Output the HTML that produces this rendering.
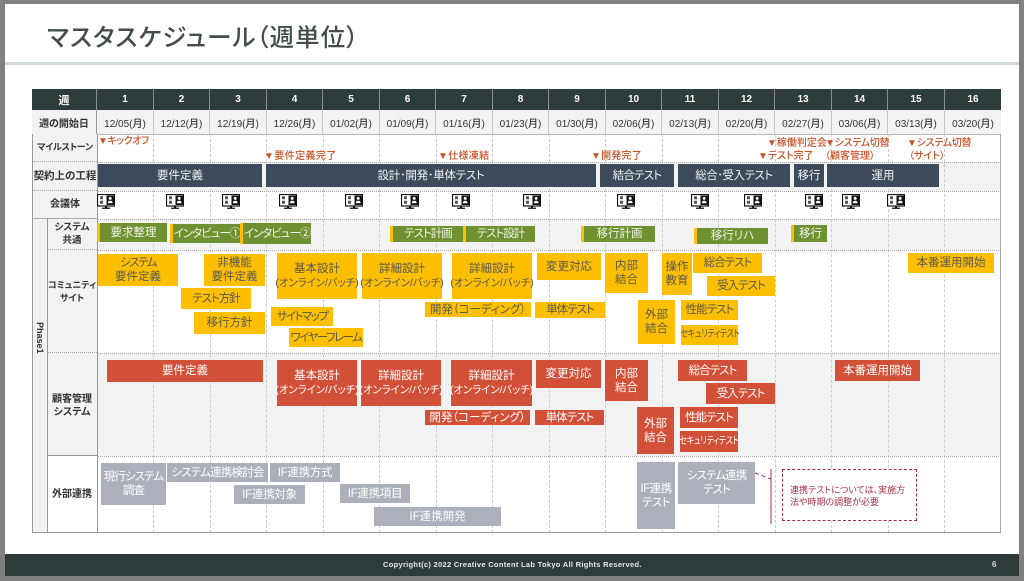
<!DOCTYPE html>
<html lang="ja"><head><meta charset="utf-8"><title>マスタスケジュール</title>
<style>
html,body{margin:0;padding:0}
body{width:1024px;height:581px;background:#fff;overflow:hidden;position:relative;font-family:"Liberation Sans","Noto Sans CJK JP",sans-serif;color:#404a4a;filter:blur(.3px)}
div{position:absolute;box-sizing:border-box}
.b{display:flex;align-items:center;justify-content:center;text-align:center;font-size:11.5px;line-height:14px;white-space:nowrap;font-feature-settings:"palt"}
.y{background:#fdbf00;color:#5a5a50}
.r{background:#d24f38;color:#fff}
.g{background:#6f9132;color:#f2f2e6;border-left:3px solid #fdbf00}
.n{background:#3c4a5c;color:#f2f2f2}
.c{background:#abb0bb;color:#fff}
.k{letter-spacing:-1px}
.k2{letter-spacing:-1.5px}
.o{font-size:10.5px;letter-spacing:-.1px}
.sc{display:inline-block;font-size:10px;letter-spacing:-.4px;transform:scaleX(.8);white-space:nowrap}
.h{background:#2f3c3c;color:#fff;font-weight:700;font-size:10px;top:89px;height:21px;display:flex;align-items:center;justify-content:center;border-right:1px solid #89908f}
.d{background:#f2f2f2;color:#333;font-size:10px;font-weight:500;top:110px;height:24px;display:flex;align-items:center;justify-content:center;border-right:1px solid #c8c8c8;white-space:nowrap;font-feature-settings:"palt"}
.l{left:47px;width:50px;display:flex;align-items:center;justify-content:center;text-align:center;font-size:9.5px;line-height:13px;font-weight:700;color:#333;background:#f2f2f2;border-bottom:1px dotted #aaa;white-space:nowrap;font-feature-settings:"palt"}
.m{color:#c8532b;font-size:10px;line-height:12px;font-weight:500;white-space:nowrap;font-feature-settings:"palt"}
.v{top:134px;height:399px;width:0;border-left:1px dashed #cccccc}
.t{left:97px;width:904px;height:0;border-top:1px dotted #a8a8a8}
svg.i{position:absolute;width:18px;height:16px;top:194px}
</style></head><body>
<div style="left:0;top:0;width:1024px;height:581px;border-style:solid;border-color:#808080;border-width:4px 5px 5px 5px"></div>
<div style="left:47px;top:23px;font-size:24.5px;line-height:32px;font-weight:500;color:#434c4c;white-space:nowrap;font-feature-settings:'palt';letter-spacing:1px">マスタスケジュール（週単位）</div>
<div style="left:5px;top:62px;width:1014px;height:3px;background:#cfd9d7"></div>

<!-- bands -->
<div style="left:97px;top:162px;width:904px;height:29px;background:#f2f2f2"></div>
<div style="left:97px;top:219px;width:904px;height:31px;background:#f2f2f2"></div>
<div style="left:97px;top:353px;width:904px;height:103px;background:#f2f2f2"></div>

<!-- header -->
<div class="h" style="left:32px;width:65px;font-size:11px">週</div>
<div class="h" style="left:97px;width:57px">1</div><div class="h" style="left:154px;width:56px">2</div><div class="h" style="left:210px;width:57px">3</div><div class="h" style="left:267px;width:56px">4</div><div class="h" style="left:323px;width:57px">5</div><div class="h" style="left:380px;width:56px">6</div><div class="h" style="left:436px;width:57px">7</div><div class="h" style="left:493px;width:56px">8</div><div class="h" style="left:549px;width:57px">9</div><div class="h" style="left:606px;width:56px">10</div><div class="h" style="left:662px;width:57px">11</div><div class="h" style="left:719px;width:56px">12</div><div class="h" style="left:775px;width:57px">13</div><div class="h" style="left:832px;width:56px">14</div><div class="h" style="left:888px;width:57px">15</div><div class="h" style="left:945px;width:56px;border-right:0">16</div>
<div class="d" style="left:32px;width:65px;font-weight:700;border-right:1px solid #999">週の開始日</div>
<div class="d" style="left:97px;width:57px">12/05(月)</div><div class="d" style="left:154px;width:56px">12/12(月)</div><div class="d" style="left:210px;width:57px">12/19(月)</div><div class="d" style="left:267px;width:56px">12/26(月)</div><div class="d" style="left:323px;width:57px">01/02(月)</div><div class="d" style="left:380px;width:56px">01/09(月)</div><div class="d" style="left:436px;width:57px">01/16(月)</div><div class="d" style="left:493px;width:56px">01/23(月)</div><div class="d" style="left:549px;width:57px">01/30(月)</div><div class="d" style="left:606px;width:56px">02/06(月)</div><div class="d" style="left:662px;width:57px">02/13(月)</div><div class="d" style="left:719px;width:56px">02/20(月)</div><div class="d" style="left:775px;width:57px">02/27(月)</div><div class="d" style="left:832px;width:56px">03/06(月)</div><div class="d" style="left:888px;width:57px">03/13(月)</div><div class="d" style="left:945px;width:56px;border-right:0">03/20(月)</div>
<div style="left:32px;top:134px;width:969px;height:1px;background:#b5b5b5"></div>

<!-- left column -->
<div style="left:32px;top:134px;width:15px;height:399px;background:#f2f2f2;border-left:1px solid #999"></div>
<div class="l" style="left:33px;width:64px;top:134px;height:28px;font-size:9px;letter-spacing:-.3px">マイルストーン</div>
<div class="l" style="left:33px;width:64px;top:162px;height:29px;font-size:10.5px">契約上の工程</div>
<div class="l" style="left:33px;width:64px;top:191px;height:28px;font-size:10px;border-bottom:1px solid #aaa">会議体</div>
<div class="l" style="top:219px;height:31px">システム<br>共通</div>
<div class="l" style="top:250px;height:103px;padding-bottom:18px;font-size:9px">コミュニティ<br>サイト</div>
<div class="l" style="top:353px;height:103px;padding-top:4px;font-size:10px;border-bottom:1px solid #999">顧客管理<br>システム</div>
<div class="l" style="top:456px;height:77px;background:#fff;border:0;font-size:10px">外部連携</div>
<div style="left:47px;top:219px;width:1px;height:314px;background:#999"></div>
<div style="left:97px;top:134px;width:1px;height:399px;background:#999"></div>
<div style="left:33px;top:322px;width:13px;height:40px;writing-mode:vertical-rl;font-size:9px;line-height:13px;font-weight:700;color:#333">Phase1</div>

<!-- grid lines -->
<div class="v" style="left:153px"></div><div class="v" style="left:210px"></div><div class="v" style="left:266px"></div><div class="v" style="left:323px"></div><div class="v" style="left:379px"></div><div class="v" style="left:436px"></div><div class="v" style="left:492px"></div><div class="v" style="left:549px"></div><div class="v" style="left:605px"></div><div class="v" style="left:662px"></div><div class="v" style="left:718px"></div><div class="v" style="left:775px"></div><div class="v" style="left:831px"></div><div class="v" style="left:888px"></div><div class="v" style="left:944px"></div>
<div class="t" style="top:162px"></div><div class="t" style="top:191px"></div><div class="t" style="top:219px"></div><div class="t" style="top:250px"></div><div class="t" style="top:353px"></div><div class="t" style="top:456px"></div>
<div style="left:1000px;top:134px;width:1px;height:399px;background:#a8a8a8"></div>
<div style="left:32px;top:532px;width:969px;height:1px;background:#999"></div>

<!-- milestones -->
<div class="m" style="left:98px;top:136px;letter-spacing:-.5px">▼キックオフ</div>
<div class="m" style="left:264px;top:151px;letter-spacing:.4px">▼要件定義完了</div>
<div class="m" style="left:438px;top:151px;letter-spacing:.3px">▼仕様凍結</div>
<div class="m" style="left:591px;top:151px;letter-spacing:.2px">▼開発完了</div>
<div class="m" style="left:767px;top:138px">▼稼働判定会</div>
<div class="m" style="left:758px;top:151px">▼テスト完了</div>
<div class="m" style="left:825px;top:138px;letter-spacing:-.3px">▼システム切替</div>
<div class="m" style="left:825px;top:151px">（顧客管理）</div>
<div class="m" style="left:907px;top:138px;letter-spacing:-.3px">▼システム切替</div>
<div class="m" style="left:909px;top:151px">（サイト）</div>

<!-- contract -->
<div class="b n" style="left:98px;top:164px;width:164px;height:23px">要件定義</div>
<div class="b n" style="left:266px;top:164px;width:330px;height:23px;letter-spacing:-.3px">設計･開発･単体テスト</div>
<div class="b n" style="left:600px;top:164px;width:74px;height:23px;letter-spacing:-.8px">結合テスト</div>
<div class="b n" style="left:678px;top:164px;width:112px;height:23px;letter-spacing:-.5px">総合･受入テスト</div>
<div class="b n" style="left:794px;top:164px;width:30px;height:23px">移行</div>
<div class="b n" style="left:827px;top:164px;width:112px;height:23px">運用</div>

<!-- meeting icons -->
<svg width="0" height="0" style="position:absolute"><defs><g id="mi"><rect x=".5" y=".5" width="17" height="11.5" fill="#fff" stroke="#111" stroke-width="1.2"/><rect x="9.5" y="1.5" width="7.5" height="9.5" fill="#111"/><circle cx="13.2" cy="4.4" r="1.5" fill="#fff"/><path d="M10.8 9.3c0-2 1-2.6 2.4-2.6s2.4.6 2.4 2.6z" fill="#fff"/><path d="M3 2.2h3v3h-3zM3 6.8h3v3h-3z" fill="#555"/><path d="M8 12h2v1.6h-2zM5 13.6h8v1.3h-8z" fill="#111"/></g></defs></svg>
<svg class="i" viewBox="0 0 18 16" style="left:97px"><use href="#mi"/></svg>
<svg class="i" viewBox="0 0 18 16" style="left:166px"><use href="#mi"/></svg>
<svg class="i" viewBox="0 0 18 16" style="left:222px"><use href="#mi"/></svg>
<svg class="i" viewBox="0 0 18 16" style="left:279px"><use href="#mi"/></svg>
<svg class="i" viewBox="0 0 18 16" style="left:345px"><use href="#mi"/></svg>
<svg class="i" viewBox="0 0 18 16" style="left:401px"><use href="#mi"/></svg>
<svg class="i" viewBox="0 0 18 16" style="left:452px"><use href="#mi"/></svg>
<svg class="i" viewBox="0 0 18 16" style="left:523px"><use href="#mi"/></svg>
<svg class="i" viewBox="0 0 18 16" style="left:617px"><use href="#mi"/></svg>
<svg class="i" viewBox="0 0 18 16" style="left:691px"><use href="#mi"/></svg>
<svg class="i" viewBox="0 0 18 16" style="left:744px"><use href="#mi"/></svg>
<svg class="i" viewBox="0 0 18 16" style="left:805px"><use href="#mi"/></svg>
<svg class="i" viewBox="0 0 18 16" style="left:842px"><use href="#mi"/></svg>
<svg class="i" viewBox="0 0 18 16" style="left:887px"><use href="#mi"/></svg>

<!-- green -->
<div class="b g" style="left:97px;top:223px;width:70px;height:19px">要求整理</div>
<div class="b g k" style="left:170px;top:224px;width:71px;height:19px">インタビュー①</div>
<div class="b g k" style="left:240px;top:223px;width:71px;height:21px">インタビュー②</div>
<div class="b g k" style="left:390px;top:226px;width:73px;height:16px">テスト計画</div>
<div class="b g k" style="left:463px;top:226px;width:72px;height:16px">テスト設計</div>
<div class="b g" style="left:581px;top:226px;width:74px;height:16px">移行計画</div>
<div class="b g" style="left:694px;top:228px;width:74px;height:16px">移行リハ</div>
<div class="b g" style="left:791px;top:225px;width:36px;height:17px">移行</div>

<!-- yellow -->
<div class="b y" style="left:98px;top:254px;width:80px;height:32px"><span><span class="k2">システム</span><br>要件定義</span></div>
<div class="b y" style="left:204px;top:254px;width:61px;height:32px">非機能<br>要件定義</div>
<div class="b y k" style="left:181px;top:288px;width:70px;height:21px">テスト方針</div>
<div class="b y" style="left:194px;top:312px;width:71px;height:22px">移行方針</div>
<div class="b y" style="left:277px;top:253px;width:80px;height:46px"><span>基本設計<br><span class="o">(オンライン/バッチ)</span></span></div>
<div class="b y" style="left:362px;top:253px;width:80px;height:46px"><span>詳細設計<br><span class="o">(オンライン/バッチ)</span></span></div>
<div class="b y" style="left:452px;top:253px;width:80px;height:46px"><span>詳細設計<br><span class="o">(オンライン/バッチ)</span></span></div>
<div class="b y k2" style="left:271px;top:307px;width:62px;height:19px">サイトマップ</div>
<div class="b y k2" style="left:289px;top:328px;width:74px;height:19px">ワイヤーフレーム</div>
<div class="b y" style="left:425px;top:302px;width:106px;height:15px">開発（コーディング）</div>
<div class="b y" style="left:537px;top:253px;width:64px;height:27px">変更対応</div>
<div class="b y k" style="left:535px;top:302px;width:70px;height:16px">単体テスト</div>
<div class="b y" style="left:605px;top:253px;width:43px;height:40px">内部<br>結合</div>
<div class="b y" style="left:662px;top:253px;width:30px;height:42px">操作<br>教育</div>
<div class="b y k" style="left:693px;top:253px;width:69px;height:20px">総合テスト</div>
<div class="b y k" style="left:707px;top:276px;width:68px;height:20px">受入テスト</div>
<div class="b y" style="left:638px;top:300px;width:37px;height:44px">外部<br>結合</div>
<div class="b y k" style="left:681px;top:300px;width:57px;height:20px">性能テスト</div>
<div class="b y" style="left:681px;top:325px;width:57px;height:20px"><span class="sc">セキュリティテスト</span></div>
<div class="b y" style="left:908px;top:253px;width:86px;height:20px">本番運用開始</div>

<!-- red -->
<div class="b r" style="left:107px;top:360px;width:156px;height:22px">要件定義</div>
<div class="b r" style="left:277px;top:360px;width:80px;height:46px"><span>基本設計<br><span class="o">(オンライン/バッチ)</span></span></div>
<div class="b r" style="left:361px;top:360px;width:80px;height:46px"><span>詳細設計<br><span class="o">(オンライン/バッチ)</span></span></div>
<div class="b r" style="left:451px;top:360px;width:81px;height:46px"><span>詳細設計<br><span class="o">(オンライン/バッチ)</span></span></div>
<div class="b r" style="left:425px;top:410px;width:105px;height:15px">開発（コーディング）</div>
<div class="b r" style="left:536px;top:360px;width:65px;height:28px">変更対応</div>
<div class="b r k" style="left:535px;top:410px;width:69px;height:15px">単体テスト</div>
<div class="b r" style="left:605px;top:360px;width:43px;height:41px">内部<br>結合</div>
<div class="b r k" style="left:678px;top:360px;width:69px;height:21px">総合テスト</div>
<div class="b r k" style="left:706px;top:383px;width:69px;height:21px">受入テスト</div>
<div class="b r" style="left:835px;top:360px;width:85px;height:21px">本番運用開始</div>
<div class="b r" style="left:637px;top:407px;width:37px;height:47px">外部<br>結合</div>
<div class="b r k" style="left:680px;top:407px;width:58px;height:21px">性能テスト</div>
<div class="b r" style="left:680px;top:431px;width:58px;height:21px"><span class="sc">セキュリティテスト</span></div>

<!-- grey -->
<div class="b c" style="left:101px;top:463px;width:65px;height:42px;letter-spacing:-.9px">現行システム<br>調査</div>
<div class="b c" style="left:167px;top:463px;width:101px;height:19px;letter-spacing:-.8px">システム連携検討会</div>
<div class="b c" style="left:270px;top:463px;width:70px;height:19px;letter-spacing:-.3px">IF連携方式</div>
<div class="b c" style="left:234px;top:485px;width:71px;height:19px;letter-spacing:-.3px">IF連携対象</div>
<div class="b c" style="left:340px;top:484px;width:70px;height:19px;letter-spacing:-.3px">IF連携項目</div>
<div class="b c" style="left:374px;top:507px;width:127px;height:19px">IF連携開発</div>
<div class="b c" style="left:637px;top:462px;width:38px;height:67px;letter-spacing:-.5px">IF連携<br>テスト</div>
<div class="b c" style="left:678px;top:462px;width:77px;height:42px;letter-spacing:-.9px">システム連携<br>テスト</div>

<!-- note -->
<svg style="position:absolute;left:750px;top:465px" width="30" height="60"><path d="M5 8L21 14" stroke="#a8324a" stroke-width="1" stroke-dasharray="4 3" fill="none"/><path d="M21 4V59" stroke="#a8324a" stroke-width="1" fill="none"/></svg>
<div style="left:782px;top:469px;width:135px;height:52px;border:1px dashed #a8324a;background:#fff"></div>
<div style="left:790px;top:484px;width:122px;font-size:9px;line-height:12px;color:#a8324a;font-feature-settings:'palt';white-space:nowrap">連携テストについては、実施方<br>法や時期の調整が必要</div>

<!-- footer -->
<div style="left:5px;top:554px;width:1014px;height:22px;background:#2f3b3b"></div>
<div style="left:383px;top:559px;font-size:7.5px;line-height:11px;font-weight:700;color:#e8e8e8;white-space:nowrap;letter-spacing:.3px">Copyright(c) 2022 Creative Content Lab Tokyo All Rights Reserved.</div>
<div style="left:992px;top:559px;font-size:8px;line-height:11px;font-weight:700;color:#ddd">6</div>
</body></html>
